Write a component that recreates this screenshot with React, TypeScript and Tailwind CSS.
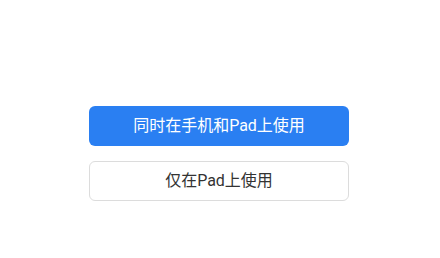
export default function App() {
  return (
    <div className="w-[440px] h-[258px] bg-white flex flex-col items-center pt-[106px] pr-[2px] gap-[15px]" style={{ fontFamily: '"Roboto", "Noto Sans CJK SC", sans-serif' }}>
      <button className="w-[260px] h-[40px] rounded-[6px] bg-[#2a7ff2] text-white text-[16px] flex items-center justify-center">
        同时在手机和Pad上使用
      </button>
      <button className="w-[260px] h-[40px] rounded-[6px] bg-white border border-[#dcdcdc] text-[#333333] text-[16px] flex items-center justify-center">
        仅在Pad上使用
      </button>
    </div>
  );
}
